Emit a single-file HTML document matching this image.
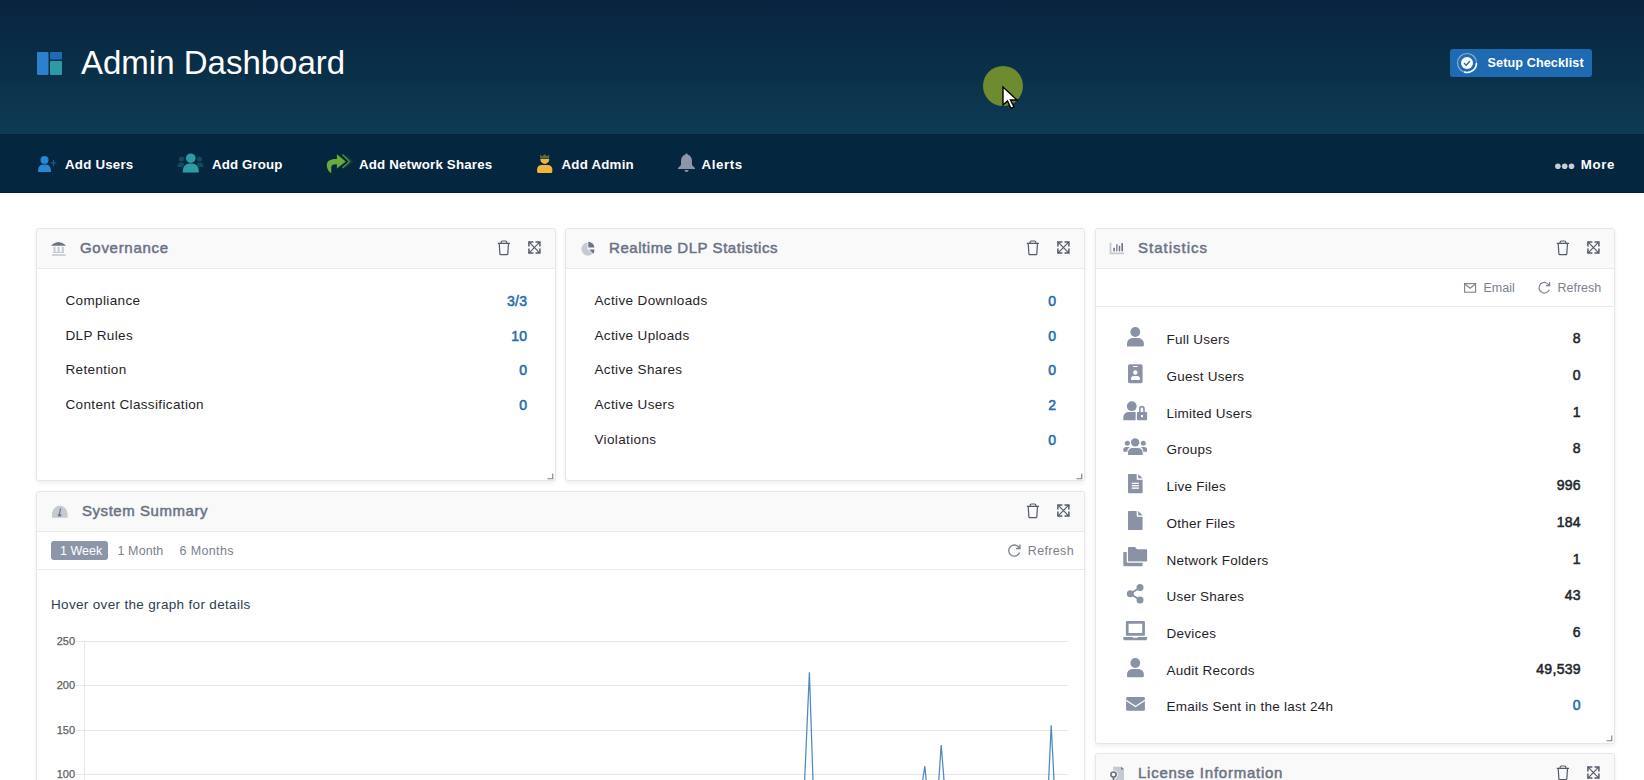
<!DOCTYPE html>
<html><head><meta charset="utf-8">
<style>
*{box-sizing:border-box;margin:0;padding:0}
html,body{width:1644px;height:780px;overflow:hidden;background:#fff;font-family:"Liberation Sans",sans-serif;position:relative}
.abs{position:absolute}
.t{position:absolute;white-space:nowrap}
#hdr{position:absolute;left:0;top:0;width:1644px;height:134px;background:linear-gradient(180deg,#08243f 0%,#0a2f48 50%,#0d3b53 100%)}
#nav{position:absolute;left:0;top:134px;width:1644px;height:59px;background:#05263f;border-bottom:1px solid #031d31}
.btn{position:absolute;left:1450px;top:49px;width:142px;height:28px;background:#1f6bb3;border-radius:3px}
.panel{position:absolute;background:#fff;border:1px solid #e6e6e7;border-radius:3px;box-shadow:0 2px 4px rgba(0,0,0,0.07);overflow:hidden}
.ph{position:absolute;left:0;top:0;right:0;height:40px;background:#f9f9f9;border-bottom:1px solid #eaeaeb}
.tb{position:absolute;left:0;right:0;border-bottom:1px solid #eaeaeb}
</style></head>
<body>
<div id="hdr"></div>
<div id="nav"></div>
<svg class="abs" style="left:37px;top:52px" width="26" height="24" viewBox="0 0 26 24">
  <rect x="0" y="0" width="11.5" height="23" rx="1" fill="#2a82cc"/>
  <rect x="13" y="0" width="12" height="7.5" rx="1" fill="#1f6bb5"/>
  <rect x="13" y="9" width="12" height="14" rx="1" fill="#2e9aa6"/>
</svg>
<div class="t" style="top:42.57px;font-size:33px;line-height:40px;color:#fff;left:81px;">Admin Dashboard</div>
<div class="abs" style="left:983px;top:66px;width:40px;height:40px;border-radius:50%;background:#6f8b30"></div>
<svg class="abs" style="left:1000.5px;top:84.5px" width="22" height="26" viewBox="0 0 22 26">
  <path d="M2 2 L2 20 L6.5 16 L10 23.5 L13 22 L9.5 15 L16 15 Z" fill="#fff" stroke="#000" stroke-width="1.4" stroke-linejoin="miter"/>
</svg>
<div class="btn"></div>
<svg class="abs" style="left:1456px;top:52px" width="22" height="22" viewBox="0 0 22 22">
  <circle cx="11" cy="11" r="9.5" fill="none" stroke="rgba(255,255,255,0.45)" stroke-width="1.2"/>
  <path d="M20.5 11 A9.5 9.5 0 0 1 8 20" fill="none" stroke="#fff" stroke-width="1.6"/>
  <circle cx="11" cy="11" r="6" fill="#fff"/>
  <path d="M8 11 L10.2 13.2 L14 9" fill="none" stroke="#1f6bb3" stroke-width="1.3"/>
</svg>
<div class="t" style="top:55.23px;font-size:12.6px;line-height:16px;color:#fff;font-weight:700;letter-spacing:0.12px;left:1487.5px;">Setup Checklist</div>
<svg class="abs" style="left:37px;top:155px" width="21" height="18" viewBox="0 0 21 18">
  <circle cx="7.5" cy="5" r="4" fill="#2a86d0"/>
  <path d="M1 17 C1 11 3 9.5 7.5 9.5 C12 9.5 14 11 14 17 Z" fill="#2a86d0"/>
  <path d="M16.5 5 V11 M13.5 8 H19.5" stroke="#1d5f8f" stroke-width="1.2"/>
</svg>
<div class="t" style="top:155.69px;font-size:13.3px;line-height:17px;color:#fff;font-weight:700;letter-spacing:0.22px;left:65px;">Add Users</div>
<svg class="abs" style="left:177px;top:153px" width="28" height="20" viewBox="0 0 28 20">
  <circle cx="4.5" cy="6" r="2.6" fill="#124b5c"/>
  <circle cx="22.5" cy="6" r="2.6" fill="#124b5c"/>
  <path d="M0.5 14 C0.5 10.5 2 9.5 4.5 9.5 C6.5 9.5 7 10 7 11 L6 14 Z" fill="#124b5c"/>
  <path d="M26.5 14 C26.5 10.5 25 9.5 22.5 9.5 C20.5 9.5 20 10 20 11 L21 14 Z" fill="#124b5c"/>
  <circle cx="13.8" cy="5.2" r="4.8" fill="#2e9aa6"/>
  <path d="M5.8 19.5 C5.8 13 8 10.5 13.8 10.5 C19.6 10.5 21.8 13 21.8 19.5 Z" fill="#2e9aa6"/>
</svg>
<div class="t" style="top:155.69px;font-size:13.3px;line-height:17px;color:#fff;font-weight:700;letter-spacing:0.12px;left:212px;">Add Group</div>
<svg class="abs" style="left:320px;top:148px" width="36" height="30" viewBox="0 0 36 30">
  <path d="M16.9 6.2 L25.8 13.5 L16.9 20.6 V16.3 C13.8 16.3 11.4 16.9 11.3 19.3 V24.8 H10.4 C8 22.6 6.8 20 6.8 17.2 C6.8 13.2 9.8 11 15.6 11 H16.9 Z" fill="#68ab3c"/>
  <path d="M22.5 6.6 L29.6 13.5 L22.5 19.9" fill="none" stroke="#4f8a35" stroke-width="1.5"/>
  <path d="M26 7.5 L32.5 13.5 L26 19.2" fill="none" stroke="#1f4a3a" stroke-width="0.9"/>
</svg>
<div class="t" style="top:155.69px;font-size:13.3px;line-height:17px;color:#fff;font-weight:700;letter-spacing:0.18px;left:359px;">Add Network Shares</div>
<svg class="abs" style="left:530px;top:148px" width="30" height="30" viewBox="0 0 30 30">
  <path d="M10.2 6.4 L12.3 8.3 L14.7 6.2 L17.1 8.3 L19.2 6.4 V10.4 H10.2 Z" fill="#5d6a3e"/>
  <path d="M10.4 11 H19.2 V11.6 C19.2 14 17.2 15.9 14.8 15.9 C12.4 15.9 10.4 14 10.4 11.6 Z" fill="#f0b63c"/>
  <path d="M7.1 23.5 V21.3 C7.1 18.6 9 16.9 11.6 16.9 H17.8 C20.4 16.9 22.3 18.6 22.3 21.3 V23.5 C22.3 24.4 21.6 25 20.8 25 H8.6 C7.7 25 7.1 24.4 7.1 23.5 Z" fill="#f0b63c"/>
</svg>
<div class="t" style="top:155.69px;font-size:13.3px;line-height:17px;color:#fff;font-weight:700;letter-spacing:0.22px;left:561.5px;">Add Admin</div>
<svg class="abs" style="left:677.5px;top:153px" width="18" height="20" viewBox="0 0 18 20">
  <path d="M8.5 0.5 C9.5 0.5 9.8 1.2 9.8 1.8 C12.5 2.5 14 4.8 14 8 L14 12 L17 15 L17 16 L0 16 L0 15 L3 12 L3 8 C3 4.8 4.5 2.5 7.2 1.8 C7.2 1.2 7.5 0.5 8.5 0.5 Z" fill="#8d96a8"/>
  <path d="M6.5 17 H10.5 C10.5 18.2 9.6 19 8.5 19 C7.4 19 6.5 18.2 6.5 17 Z" fill="#8d96a8"/>
</svg>
<div class="t" style="top:155.69px;font-size:13.3px;line-height:17px;color:#fff;font-weight:700;letter-spacing:0.6px;left:701.5px;">Alerts</div>
<svg class="abs" style="left:1555px;top:163px" width="20" height="7" viewBox="0 0 20 7">
  <circle cx="2.9" cy="3.3" r="2.8" fill="#c8ccd4"/>
  <circle cx="9.7" cy="3.3" r="2.8" fill="#c8ccd4"/>
  <circle cx="16.5" cy="3.3" r="2.8" fill="#c8ccd4"/>
</svg>
<div class="t" style="top:155.69px;font-size:13.3px;line-height:17px;color:#fff;font-weight:700;letter-spacing:0.6px;left:1580.8px;">More</div>
<div class="panel" style="left:36px;top:228px;width:520px;height:253px"><div class="ph"></div></div>
<div class="t" style="top:239.40px;font-size:15px;line-height:18px;color:#6b7386;letter-spacing:0.7px;left:80px;-webkit-text-stroke:0.5px #6b7386;">Governance</div>
<svg class="abs" style="left:497px;top:240px" width="15" height="16" viewBox="0 0 15 16">
  <path d="M0.8 3.3 H13 M4.1 3.3 V2.3 C4.1 1.5 4.6 1 5.4 1 H8.5 C9.3 1 9.8 1.5 9.8 2.3 V3.3 M2.2 3.3 L2.9 13.9 C2.95 14.4 3.2 14.7 3.7 14.7 H10 C10.5 14.7 10.75 14.4 10.8 13.9 L11.5 3.3" fill="none" stroke="#535b6b" stroke-width="1.2" stroke-linejoin="round"/>
</svg>
<svg class="abs" style="left:528px;top:241px" width="14" height="14" viewBox="0 0 14 14">
  <path d="M1.2 1.2 L11.6 11.8 M11.6 1.2 L1.2 11.8" stroke="#535b6b" stroke-width="1.15"/>
  <path d="M0.9 5.4 V0.9 H5.4 M7.5 0.9 H11.9 V5.4 M0.9 7.6 V12.1 H5.4 M7.5 12.1 H11.9 V7.6" fill="none" stroke="#535b6b" stroke-width="1.5"/>
  <path d="M0.9 0.9 H2.6 L0.9 2.6 Z M11.9 0.9 H10.2 L11.9 2.6 Z M0.9 12.1 H2.6 L0.9 10.4 Z M11.9 12.1 H10.2 L11.9 10.4 Z" fill="#535b6b"/>
</svg>
<svg class="abs" style="left:51px;top:241px" width="16" height="16" viewBox="0 0 16 16">
  <path d="M0 4.8 C1.5 3.2 4.5 0.9 7.5 0.9 C10.5 0.9 13.5 3.2 15 4.8 Z" fill="#6b7386"/>
  <rect x="2.5" y="5.8" width="2" height="6.2" fill="#c5c9d1"/>
  <rect x="6.6" y="5.8" width="2" height="6.2" fill="#c5c9d1"/>
  <rect x="10.8" y="5.8" width="2" height="6.2" fill="#c5c9d1"/>
  <rect x="2" y="11" width="11" height="1" fill="#c5c9d1"/>
  <rect x="1" y="13.2" width="13.5" height="1.6" fill="#c5c9d1"/>
</svg>
<div class="t" style="top:292.12px;font-size:13.5px;line-height:18px;color:#1f2329;letter-spacing:0.36px;left:65.5px;">Compliance</div>
<div class="t" style="top:291.95px;font-size:14px;line-height:18px;color:#1f6db2;letter-spacing:0.3px;right:1116.6px;text-align:right;-webkit-text-stroke:0.55px #1f6db2;">3/3</div>
<div class="t" style="top:327.02px;font-size:13.5px;line-height:18px;color:#1f2329;letter-spacing:0.36px;left:65.5px;">DLP Rules</div>
<div class="t" style="top:326.85px;font-size:14px;line-height:18px;color:#1f6db2;letter-spacing:0.3px;right:1116.6px;text-align:right;-webkit-text-stroke:0.55px #1f6db2;">10</div>
<div class="t" style="top:361.02px;font-size:13.5px;line-height:18px;color:#1f2329;letter-spacing:0.36px;left:65.5px;">Retention</div>
<div class="t" style="top:360.85px;font-size:14px;line-height:18px;color:#1f6db2;letter-spacing:0.3px;right:1116.6px;text-align:right;-webkit-text-stroke:0.55px #1f6db2;">0</div>
<div class="t" style="top:395.92px;font-size:13.5px;line-height:18px;color:#1f2329;letter-spacing:0.36px;left:65.5px;">Content Classification</div>
<div class="t" style="top:395.75px;font-size:14px;line-height:18px;color:#1f6db2;letter-spacing:0.3px;right:1116.6px;text-align:right;-webkit-text-stroke:0.55px #1f6db2;">0</div>
<svg class="abs" style="left:547px;top:472.5px" width="7" height="7" viewBox="0 0 7 7"><path d="M5.8 0.5 V5.8 H0.5" fill="none" stroke="#7a7f88" stroke-width="1.1"/></svg>
<div class="panel" style="left:565px;top:228px;width:520px;height:253px"><div class="ph"></div></div>
<div class="t" style="top:239.40px;font-size:15px;line-height:18px;color:#6b7386;letter-spacing:0.55px;left:609px;-webkit-text-stroke:0.5px #6b7386;">Realtime DLP Statistics</div>
<svg class="abs" style="left:1026px;top:240px" width="15" height="16" viewBox="0 0 15 16">
  <path d="M0.8 3.3 H13 M4.1 3.3 V2.3 C4.1 1.5 4.6 1 5.4 1 H8.5 C9.3 1 9.8 1.5 9.8 2.3 V3.3 M2.2 3.3 L2.9 13.9 C2.95 14.4 3.2 14.7 3.7 14.7 H10 C10.5 14.7 10.75 14.4 10.8 13.9 L11.5 3.3" fill="none" stroke="#535b6b" stroke-width="1.2" stroke-linejoin="round"/>
</svg>
<svg class="abs" style="left:1057px;top:241px" width="14" height="14" viewBox="0 0 14 14">
  <path d="M1.2 1.2 L11.6 11.8 M11.6 1.2 L1.2 11.8" stroke="#535b6b" stroke-width="1.15"/>
  <path d="M0.9 5.4 V0.9 H5.4 M7.5 0.9 H11.9 V5.4 M0.9 7.6 V12.1 H5.4 M7.5 12.1 H11.9 V7.6" fill="none" stroke="#535b6b" stroke-width="1.5"/>
  <path d="M0.9 0.9 H2.6 L0.9 2.6 Z M11.9 0.9 H10.2 L11.9 2.6 Z M0.9 12.1 H2.6 L0.9 10.4 Z M11.9 12.1 H10.2 L11.9 10.4 Z" fill="#535b6b"/>
</svg>
<svg class="abs" style="left:580px;top:241px" width="16" height="16" viewBox="0 0 16 16">
  <path d="M7.5 1.5 A6.5 6.5 0 1 0 12.6 12.5 L7.5 8.2 Z" fill="#c5c9d1"/>
  <path d="M8.3 0.8 A6.2 6.2 0 0 1 14.4 6.6 L8.3 6.6 Z" fill="#6b7386"/>
  <path d="M9.2 8.6 L14.4 8.6 A6.2 6.2 0 0 1 13.2 12.8 Z" fill="#6b7386"/>
</svg>
<div class="t" style="top:292.12px;font-size:13.5px;line-height:18px;color:#1f2329;letter-spacing:0.36px;left:594.5px;">Active Downloads</div>
<div class="t" style="top:291.95px;font-size:14px;line-height:18px;color:#1f6db2;letter-spacing:0.3px;right:587.5999999999999px;text-align:right;-webkit-text-stroke:0.55px #1f6db2;">0</div>
<div class="t" style="top:327.02px;font-size:13.5px;line-height:18px;color:#1f2329;letter-spacing:0.36px;left:594.5px;">Active Uploads</div>
<div class="t" style="top:326.85px;font-size:14px;line-height:18px;color:#1f6db2;letter-spacing:0.3px;right:587.5999999999999px;text-align:right;-webkit-text-stroke:0.55px #1f6db2;">0</div>
<div class="t" style="top:361.02px;font-size:13.5px;line-height:18px;color:#1f2329;letter-spacing:0.36px;left:594.5px;">Active Shares</div>
<div class="t" style="top:360.85px;font-size:14px;line-height:18px;color:#1f6db2;letter-spacing:0.3px;right:587.5999999999999px;text-align:right;-webkit-text-stroke:0.55px #1f6db2;">0</div>
<div class="t" style="top:395.92px;font-size:13.5px;line-height:18px;color:#1f2329;letter-spacing:0.36px;left:594.5px;">Active Users</div>
<div class="t" style="top:395.75px;font-size:14px;line-height:18px;color:#1f6db2;letter-spacing:0.3px;right:587.5999999999999px;text-align:right;-webkit-text-stroke:0.55px #1f6db2;">2</div>
<div class="t" style="top:430.82px;font-size:13.5px;line-height:18px;color:#1f2329;letter-spacing:0.36px;left:594.5px;">Violations</div>
<div class="t" style="top:430.65px;font-size:14px;line-height:18px;color:#1f6db2;letter-spacing:0.3px;right:587.5999999999999px;text-align:right;-webkit-text-stroke:0.55px #1f6db2;">0</div>
<svg class="abs" style="left:1076px;top:472.5px" width="7" height="7" viewBox="0 0 7 7"><path d="M5.8 0.5 V5.8 H0.5" fill="none" stroke="#7a7f88" stroke-width="1.1"/></svg>
<div class="panel" style="left:1095px;top:228px;width:520px;height:516px"><div class="ph"></div><div class="tb" style="top:40px;height:38px"></div></div>
<div class="t" style="top:239.40px;font-size:15px;line-height:18px;color:#6b7386;letter-spacing:1.0px;left:1138px;-webkit-text-stroke:0.5px #6b7386;">Statistics</div>
<svg class="abs" style="left:1556px;top:240px" width="15" height="16" viewBox="0 0 15 16">
  <path d="M0.8 3.3 H13 M4.1 3.3 V2.3 C4.1 1.5 4.6 1 5.4 1 H8.5 C9.3 1 9.8 1.5 9.8 2.3 V3.3 M2.2 3.3 L2.9 13.9 C2.95 14.4 3.2 14.7 3.7 14.7 H10 C10.5 14.7 10.75 14.4 10.8 13.9 L11.5 3.3" fill="none" stroke="#535b6b" stroke-width="1.2" stroke-linejoin="round"/>
</svg>
<svg class="abs" style="left:1587px;top:241px" width="14" height="14" viewBox="0 0 14 14">
  <path d="M1.2 1.2 L11.6 11.8 M11.6 1.2 L1.2 11.8" stroke="#535b6b" stroke-width="1.15"/>
  <path d="M0.9 5.4 V0.9 H5.4 M7.5 0.9 H11.9 V5.4 M0.9 7.6 V12.1 H5.4 M7.5 12.1 H11.9 V7.6" fill="none" stroke="#535b6b" stroke-width="1.5"/>
  <path d="M0.9 0.9 H2.6 L0.9 2.6 Z M11.9 0.9 H10.2 L11.9 2.6 Z M0.9 12.1 H2.6 L0.9 10.4 Z M11.9 12.1 H10.2 L11.9 10.4 Z" fill="#535b6b"/>
</svg>
<svg class="abs" style="left:1109px;top:242px" width="16" height="13" viewBox="0 0 16 13">
  <path d="M1.5 0.5 V11.3 H15" fill="none" stroke="#c5c9d1" stroke-width="1.8"/>
  <rect x="4.3" y="5.8" width="1.6" height="3.6" rx="0.6" fill="#6b7386"/>
  <rect x="7" y="2" width="1.6" height="7.4" rx="0.6" fill="#8a91a0"/>
  <rect x="9.8" y="3.8" width="1.4" height="5.6" rx="0.6" fill="#6b7386"/>
  <rect x="12.4" y="1" width="1.6" height="8.4" rx="0.6" fill="#6b7386"/>
</svg>
<svg class="abs" style="left:1463px;top:282px" width="14" height="11" viewBox="0 0 14 11">
  <rect x="1.6" y="1.6" width="11" height="8.6" fill="none" stroke="#7b818e" stroke-width="1.1"/>
  <path d="M1.8 2 L7.1 6.2 L12.4 2" fill="none" stroke="#7b818e" stroke-width="1.1"/>
</svg>
<div class="t" style="top:279.67px;font-size:12.5px;line-height:16px;color:#7b818e;left:1483.5px;">Email</div>
<svg class="abs" style="left:1537px;top:280px" width="15" height="15" viewBox="0 0 15 15">
  <path d="M12 5.2 A5.3 5.3 0 1 0 12.3 9.6" fill="none" stroke="#7b818e" stroke-width="1.2"/>
  <path d="M12.6 2 V5.6 H9" fill="none" stroke="#7b818e" stroke-width="1.2"/>
</svg>
<div class="t" style="top:279.67px;font-size:12.5px;line-height:16px;color:#7b818e;left:1557.5px;">Refresh</div>
<div class="t" style="top:330.72px;font-size:13.5px;line-height:18px;color:#1f2329;letter-spacing:0.25px;left:1166.6px;">Full Users</div>
<div class="t" style="top:328.65px;font-size:14px;line-height:18px;color:#23272e;letter-spacing:0.3px;right:63.09999999999991px;text-align:right;-webkit-text-stroke:0.55px #23272e;">8</div>
<div class="t" style="top:367.92px;font-size:13.5px;line-height:18px;color:#1f2329;letter-spacing:0.25px;left:1166.6px;">Guest Users</div>
<div class="t" style="top:365.85px;font-size:14px;line-height:18px;color:#23272e;letter-spacing:0.3px;right:63.09999999999991px;text-align:right;-webkit-text-stroke:0.55px #23272e;">0</div>
<div class="t" style="top:405.12px;font-size:13.5px;line-height:18px;color:#1f2329;letter-spacing:0.25px;left:1166.6px;">Limited Users</div>
<div class="t" style="top:403.05px;font-size:14px;line-height:18px;color:#23272e;letter-spacing:0.3px;right:63.09999999999991px;text-align:right;-webkit-text-stroke:0.55px #23272e;">1</div>
<div class="t" style="top:441.42px;font-size:13.5px;line-height:18px;color:#1f2329;letter-spacing:0.25px;left:1166.6px;">Groups</div>
<div class="t" style="top:439.35px;font-size:14px;line-height:18px;color:#23272e;letter-spacing:0.3px;right:63.09999999999991px;text-align:right;-webkit-text-stroke:0.55px #23272e;">8</div>
<div class="t" style="top:478.12px;font-size:13.5px;line-height:18px;color:#1f2329;letter-spacing:0.25px;left:1166.6px;">Live Files</div>
<div class="t" style="top:476.05px;font-size:14px;line-height:18px;color:#23272e;letter-spacing:0.3px;right:63.09999999999991px;text-align:right;-webkit-text-stroke:0.55px #23272e;">996</div>
<div class="t" style="top:515.12px;font-size:13.5px;line-height:18px;color:#1f2329;letter-spacing:0.25px;left:1166.6px;">Other Files</div>
<div class="t" style="top:513.05px;font-size:14px;line-height:18px;color:#23272e;letter-spacing:0.3px;right:63.09999999999991px;text-align:right;-webkit-text-stroke:0.55px #23272e;">184</div>
<div class="t" style="top:551.62px;font-size:13.5px;line-height:18px;color:#1f2329;letter-spacing:0.25px;left:1166.6px;">Network Folders</div>
<div class="t" style="top:549.55px;font-size:14px;line-height:18px;color:#23272e;letter-spacing:0.3px;right:63.09999999999991px;text-align:right;-webkit-text-stroke:0.55px #23272e;">1</div>
<div class="t" style="top:588.12px;font-size:13.5px;line-height:18px;color:#1f2329;letter-spacing:0.25px;left:1166.6px;">User Shares</div>
<div class="t" style="top:586.05px;font-size:14px;line-height:18px;color:#23272e;letter-spacing:0.3px;right:63.09999999999991px;text-align:right;-webkit-text-stroke:0.55px #23272e;">43</div>
<div class="t" style="top:624.92px;font-size:13.5px;line-height:18px;color:#1f2329;letter-spacing:0.25px;left:1166.6px;">Devices</div>
<div class="t" style="top:622.85px;font-size:14px;line-height:18px;color:#23272e;letter-spacing:0.3px;right:63.09999999999991px;text-align:right;-webkit-text-stroke:0.55px #23272e;">6</div>
<div class="t" style="top:662.12px;font-size:13.5px;line-height:18px;color:#1f2329;letter-spacing:0.25px;left:1166.6px;">Audit Records</div>
<div class="t" style="top:660.05px;font-size:14px;line-height:18px;color:#23272e;letter-spacing:0.3px;right:63.09999999999991px;text-align:right;-webkit-text-stroke:0.55px #23272e;">49,539</div>
<div class="t" style="top:698.12px;font-size:13.5px;line-height:18px;color:#1f2329;letter-spacing:0.25px;left:1166.6px;">Emails Sent in the last 24h</div>
<div class="t" style="top:696.05px;font-size:14px;line-height:18px;color:#1f6db2;letter-spacing:0.3px;right:63.09999999999991px;text-align:right;-webkit-text-stroke:0.55px #1f6db2;">0</div>

<svg class="abs" style="left:1120px;top:322px" width="30" height="400" viewBox="1120 322 30 400">
 <g fill="#8a93a5">
  <!-- full users -->
  <circle cx="1135.3" cy="332" r="4.9"/>
  <path d="M1127 346.5 V344 C1127 340.5 1129.5 338 1133 338 H1137.8 C1141.3 338 1143.9 340.5 1143.9 344 V345.3 C1143.9 346 1143.4 346.5 1142.7 346.5 Z"/>
  <!-- guest -->
  <rect x="1128" y="364.3" width="14.6" height="18.9" rx="1.6"/>
  <!-- limited -->
  <circle cx="1131.8" cy="406.2" r="4.9"/>
  <path d="M1123.3 420.2 V417.5 C1123.3 414.5 1125.5 412 1128.5 412 H1135.6 V420.2 Z"/>
  <rect x="1136.9" y="412" width="10.2" height="8.2" rx="1"/>
  <path d="M1139.8 412 V409 C1139.8 407.3 1140.7 406.6 1141.9 406.6 C1143.1 406.6 1144 407.3 1144 409 V412" fill="none" stroke="#8a93a5" stroke-width="1.6"/>
  <!-- groups -->
  <circle cx="1135.2" cy="442.4" r="4.2"/>
  <path d="M1128 455 V452.5 C1128 449.8 1129.8 447.9 1132.5 447.9 H1138 C1140.7 447.9 1142.6 449.8 1142.6 452.5 V455 Z"/>
  <circle cx="1127.3" cy="443.3" r="2.5"/>
  <circle cx="1143.3" cy="443.3" r="2.5"/>
  <path d="M1123.3 451.8 V449.5 C1123.3 447.9 1124.3 446.9 1126 446.9 H1130 C1128.3 448 1127.3 449.5 1127.3 451.8 Z"/>
  <path d="M1147.1 451.8 V449.5 C1147.1 447.9 1146.1 446.9 1144.4 446.9 H1140.8 C1142.4 448 1143.3 449.5 1143.3 451.8 Z"/>
  <!-- live files -->
  <path d="M1129 474 H1137 V478.8 H1142.6 V492.2 C1142.6 492.8 1142.2 493.2 1141.6 493.2 H1129 C1128.4 493.2 1128 492.8 1128 492.2 V475 C1128 474.4 1128.4 474 1129 474 Z"/>
  <path d="M1138.2 474 L1142.6 478.2 H1138.2 Z"/>
  <!-- other files -->
  <path d="M1129 511 H1137 V515.8 H1142.6 V529.1 C1142.6 529.7 1142.2 530.1 1141.6 530.1 H1129 C1128.4 530.1 1128 529.7 1128 529.1 V512 C1128 511.4 1128.4 511 1129 511 Z"/>
  <path d="M1138.2 511 L1142.6 515.2 H1138.2 Z"/>
  <!-- network folders -->
  <path d="M1124.3 552 H1127 V562 H1142.6 V565.2 C1142.6 565.8 1142.2 566.2 1141.6 566.2 H1124.3 C1123.7 566.2 1123.3 565.8 1123.3 565.2 V553 C1123.3 552.4 1123.7 552 1124.3 552 Z"/>
  <path d="M1129 547.1 H1135 L1137 549.3 H1146.1 C1146.7 549.3 1147.1 549.7 1147.1 550.3 V560.5 C1147.1 561.1 1146.7 561.5 1146.1 561.5 H1129 C1128.4 561.5 1128 561.1 1128 560.5 V548.1 C1128 547.5 1128.4 547.1 1129 547.1 Z"/>
  <!-- shares -->
  <circle cx="1140" cy="587.6" r="3.5"/>
  <circle cx="1130.3" cy="593.8" r="3.5"/>
  <circle cx="1140" cy="600" r="3.5"/>
  <path d="M1130.3 593.8 L1140 587.6 M1130.3 593.8 L1140 600" stroke="#8a93a5" stroke-width="1.8"/>
  <!-- devices -->
  <path d="M1127 621.1 H1143.8 C1144.4 621.1 1144.9 621.6 1144.9 622.2 V635.7 H1125.9 V622.2 C1125.9 621.6 1126.4 621.1 1127 621.1 Z M1128.6 623.8 V633 H1142.2 V623.8 Z" fill-rule="evenodd"/>
  <path d="M1123.3 637 H1132.5 L1133.3 637.8 H1137.3 L1138.1 637 H1147.1 V638.7 C1147.1 639.5 1146.5 640.2 1145.6 640.2 H1124.8 C1124 640.2 1123.3 639.5 1123.3 638.7 Z"/>
  <!-- audit -->
  <circle cx="1135.3" cy="663" r="4.9"/>
  <path d="M1127 677.2 V674.7 C1127 671.2 1129.5 669 1133 669 H1137.8 C1141.3 669 1143.9 671.2 1143.9 674.7 V676 C1143.9 676.7 1143.4 677.2 1142.7 677.2 Z"/>
  <!-- emails -->
  <rect x="1126.1" y="696.9" width="18.8" height="13.9" rx="1.4"/>
 </g>
 <g fill="#fff">
  <rect x="1133" y="366" width="4.7" height="1.1" rx="0.5"/>
  <circle cx="1135.3" cy="372.5" r="2.2"/>
  <path d="M1131.1 379.9 V378.3 C1131.1 377 1132 376 1133.3 376 H1137.5 C1138.8 376 1139.8 377 1139.8 378.3 V379.9 Z"/>
  <rect x="1141" y="415" width="2" height="2.2"/>
  <rect x="1131.8" y="482.7" width="7.1" height="1.3"/>
  <rect x="1131.8" y="485" width="7.1" height="1.3"/>
  <rect x="1131.8" y="487.4" width="7.1" height="1.4"/>
 </g>
 <path d="M1137.2 473.5 V479.3 H1143" fill="none" stroke="#fff" stroke-width="1"/>
 <path d="M1137.2 510.5 V516.3 H1143" fill="none" stroke="#fff" stroke-width="1"/>
 <path d="M1127.2 551.2 V562.3 H1143" fill="none" stroke="#fff" stroke-width="0.9"/>
 <path d="M1126 700.3 L1135.5 706.6 L1145 700.3" fill="none" stroke="#fff" stroke-width="1.2"/>
</svg>
<svg class="abs" style="left:1606px;top:734.8px" width="7" height="7" viewBox="0 0 7 7"><path d="M5.8 0.5 V5.8 H0.5" fill="none" stroke="#7a7f88" stroke-width="1.1"/></svg>
<div class="panel" style="left:36px;top:491px;width:1049px;height:330px"><div class="ph"></div><div class="tb" style="top:40px;height:38px"></div></div>
<div class="t" style="top:502.40px;font-size:15px;line-height:18px;color:#6b7386;letter-spacing:0.55px;left:82px;-webkit-text-stroke:0.5px #6b7386;">System Summary</div>
<svg class="abs" style="left:1026px;top:503px" width="15" height="16" viewBox="0 0 15 16">
  <path d="M0.8 3.3 H13 M4.1 3.3 V2.3 C4.1 1.5 4.6 1 5.4 1 H8.5 C9.3 1 9.8 1.5 9.8 2.3 V3.3 M2.2 3.3 L2.9 13.9 C2.95 14.4 3.2 14.7 3.7 14.7 H10 C10.5 14.7 10.75 14.4 10.8 13.9 L11.5 3.3" fill="none" stroke="#535b6b" stroke-width="1.2" stroke-linejoin="round"/>
</svg>
<svg class="abs" style="left:1057px;top:504px" width="14" height="14" viewBox="0 0 14 14">
  <path d="M1.2 1.2 L11.6 11.8 M11.6 1.2 L1.2 11.8" stroke="#535b6b" stroke-width="1.15"/>
  <path d="M0.9 5.4 V0.9 H5.4 M7.5 0.9 H11.9 V5.4 M0.9 7.6 V12.1 H5.4 M7.5 12.1 H11.9 V7.6" fill="none" stroke="#535b6b" stroke-width="1.5"/>
  <path d="M0.9 0.9 H2.6 L0.9 2.6 Z M11.9 0.9 H10.2 L11.9 2.6 Z M0.9 12.1 H2.6 L0.9 10.4 Z M11.9 12.1 H10.2 L11.9 10.4 Z" fill="#535b6b"/>
</svg>
<svg class="abs" style="left:51px;top:505px" width="18" height="14" viewBox="0 0 18 14">
  <path d="M1 12.8 V9.5 C1 4.7 4.5 0.8 8.8 0.8 C13.1 0.8 16.6 4.7 16.6 9.5 V12.8 Z" fill="#c5c9d1"/>
  <path d="M9.6 3.3 L8.3 9.6" stroke="#6b7386" stroke-width="1.2"/>
  <rect x="6.8" y="9.3" width="3.4" height="2" fill="#6b7386"/>
</svg>
<div class="abs" style="left:51px;top:541px;width:57px;height:19px;background:#8c96a8;border-radius:3px"></div>
<div class="t" style="top:543.17px;font-size:12.5px;line-height:16px;color:#fff;left:60px;">1 Week</div>
<div class="t" style="top:543.17px;font-size:12.5px;line-height:16px;color:#7b818e;letter-spacing:0.1px;left:117.5px;">1 Month</div>
<div class="t" style="top:543.17px;font-size:12.5px;line-height:16px;color:#7b818e;letter-spacing:0.35px;left:179.6px;">6 Months</div>
<svg class="abs" style="left:1007px;top:543px" width="15" height="15" viewBox="0 0 15 15">
  <path d="M12.3 5 A5.6 5.6 0 1 0 12.6 9.5" fill="none" stroke="#7b818e" stroke-width="1.3"/>
  <path d="M13 1.5 V5.5 H9" fill="none" stroke="#7b818e" stroke-width="1.3"/>
</svg>
<div class="t" style="top:543.17px;font-size:12.5px;line-height:16px;color:#7b818e;letter-spacing:0.35px;left:1027.8px;">Refresh</div>
<div class="t" style="top:595.82px;font-size:13.5px;line-height:18px;color:#2d3e50;letter-spacing:0.33px;left:51px;">Hover over the graph for details</div>
<svg class="abs" style="left:0;top:0" width="1644" height="780" viewBox="0 0 1644 780">
<path d="M76 641.5 H1067.5" stroke="#e6e6e6" stroke-width="1"/>
<path d="M76 685.5 H1067.5" stroke="#e6e6e6" stroke-width="1"/>
<path d="M76 730.5 H1067.5" stroke="#e6e6e6" stroke-width="1"/>
<path d="M76 774.5 H1067.5" stroke="#e6e6e6" stroke-width="1"/>
<path d="M84.5 641 V780" stroke="#e6e6e6" stroke-width="1"/>
<path d="M804.2 790 L809.4 672.3 L813.3 790" fill="none" stroke="#4f89c3" stroke-width="1.25" stroke-linejoin="miter"/>
<path d="M921.2 790 L924.8 766.2 L927.2 790" fill="none" stroke="#4f89c3" stroke-width="1.25" stroke-linejoin="miter"/>
<path d="M938.1 790 L941.2 745 L944.8 790" fill="none" stroke="#4f89c3" stroke-width="1.25" stroke-linejoin="miter"/>
<path d="M1048.2 790 L1051.2 725.2 L1054.5 790" fill="none" stroke="#4f89c3" stroke-width="1.25" stroke-linejoin="miter"/>
</svg>
<div class="t" style="top:634.29px;font-size:11px;line-height:14px;color:#606060;right:1569px;text-align:right;-webkit-text-stroke:0.25px #606060;">250</div>
<div class="t" style="top:678.29px;font-size:11px;line-height:14px;color:#606060;right:1569px;text-align:right;-webkit-text-stroke:0.25px #606060;">200</div>
<div class="t" style="top:723.29px;font-size:11px;line-height:14px;color:#606060;right:1569px;text-align:right;-webkit-text-stroke:0.25px #606060;">150</div>
<div class="t" style="top:767.29px;font-size:11px;line-height:14px;color:#606060;right:1569px;text-align:right;-webkit-text-stroke:0.25px #606060;">100</div>
<div class="panel" style="left:1095px;top:753px;width:520px;height:100px"><div class="ph"></div></div>
<div class="t" style="top:764.40px;font-size:15px;line-height:18px;color:#6b7386;letter-spacing:0.75px;left:1138px;-webkit-text-stroke:0.5px #6b7386;">License Information</div>
<svg class="abs" style="left:1556px;top:765px" width="15" height="16" viewBox="0 0 15 16">
  <path d="M0.8 3.3 H13 M4.1 3.3 V2.3 C4.1 1.5 4.6 1 5.4 1 H8.5 C9.3 1 9.8 1.5 9.8 2.3 V3.3 M2.2 3.3 L2.9 13.9 C2.95 14.4 3.2 14.7 3.7 14.7 H10 C10.5 14.7 10.75 14.4 10.8 13.9 L11.5 3.3" fill="none" stroke="#535b6b" stroke-width="1.2" stroke-linejoin="round"/>
</svg>
<svg class="abs" style="left:1587px;top:766px" width="14" height="14" viewBox="0 0 14 14">
  <path d="M1.2 1.2 L11.6 11.8 M11.6 1.2 L1.2 11.8" stroke="#535b6b" stroke-width="1.15"/>
  <path d="M0.9 5.4 V0.9 H5.4 M7.5 0.9 H11.9 V5.4 M0.9 7.6 V12.1 H5.4 M7.5 12.1 H11.9 V7.6" fill="none" stroke="#535b6b" stroke-width="1.5"/>
  <path d="M0.9 0.9 H2.6 L0.9 2.6 Z M11.9 0.9 H10.2 L11.9 2.6 Z M0.9 12.1 H2.6 L0.9 10.4 Z M11.9 12.1 H10.2 L11.9 10.4 Z" fill="#535b6b"/>
</svg>
<svg class="abs" style="left:1106px;top:766px" width="20" height="16" viewBox="0 0 20 16">
  <path d="M7 0.8 H15.5 L18 3.3 V16 H7 Z" fill="#c5c9d1"/>
  <path d="M15.2 0.8 L18 3.6 H15.2 Z" fill="#6b7386"/>
  <circle cx="7.5" cy="8.6" r="4.3" fill="#f9f9f9"/>
  <rect x="5.6" y="10" width="3.8" height="6" fill="#f9f9f9"/>
  <circle cx="7.5" cy="8.6" r="2.6" fill="#fff" stroke="#6b7386" stroke-width="1.7"/>
  <rect x="6.6" y="11" width="1.8" height="5" fill="#6b7386"/>
</svg>
</body></html>
